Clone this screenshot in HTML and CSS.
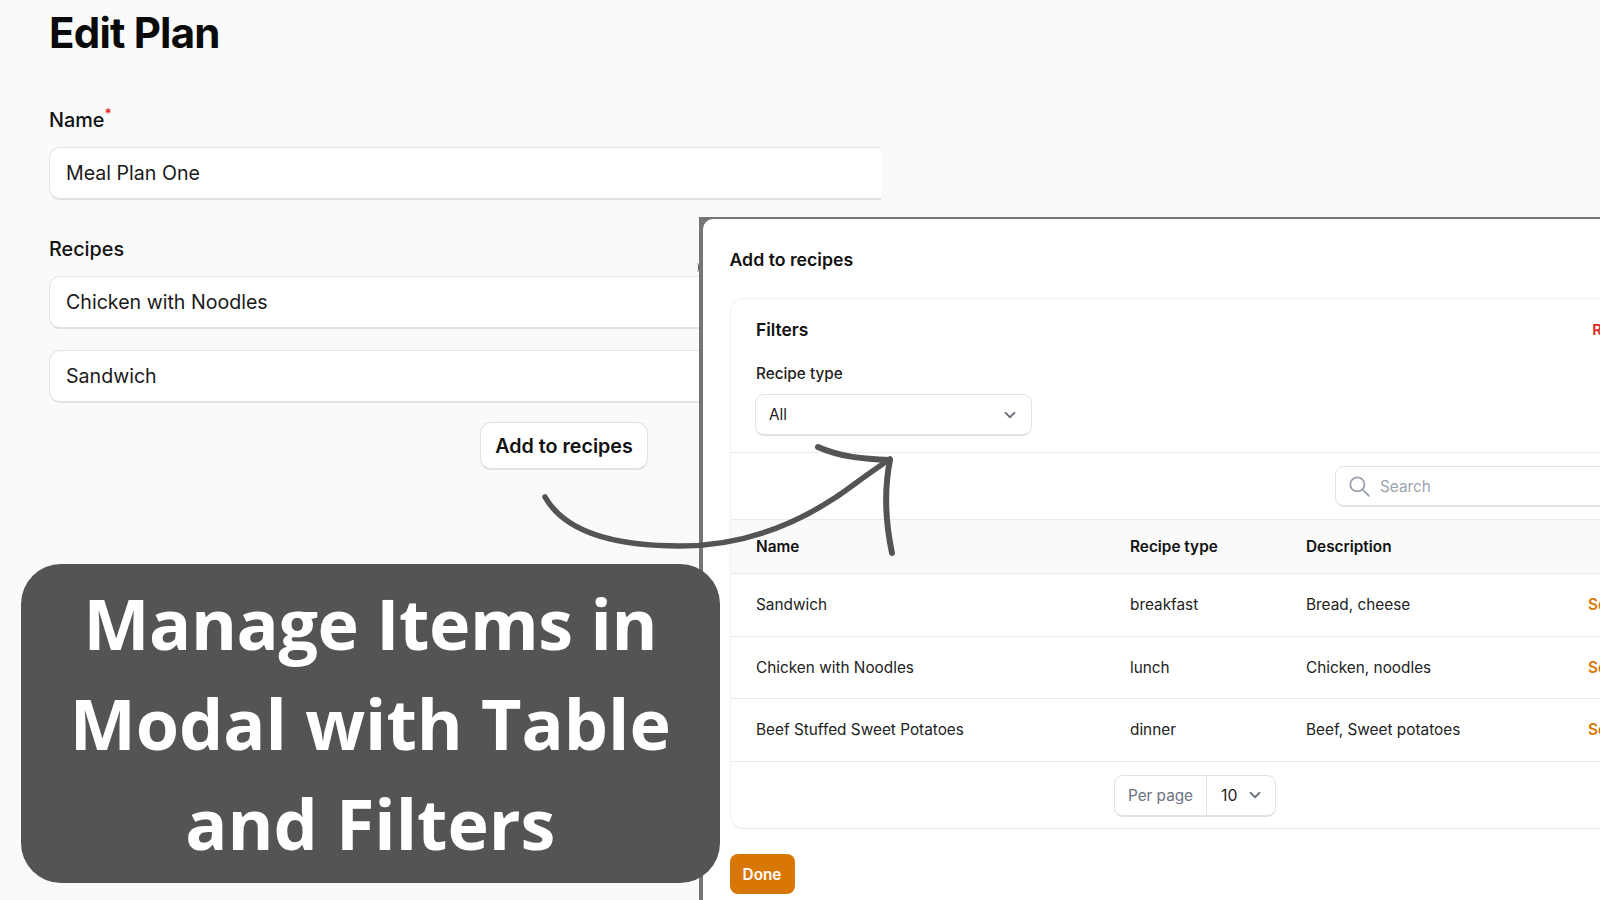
FILE: index.html
```html
<!DOCTYPE html>
<html lang="en">
<head>
<meta charset="utf-8">
<title>Edit Plan</title>
<link rel="stylesheet" href="styles.css">
</head>
<body>
<main class="page">
  <h1 class="title">Edit Plan</h1>
  <div class="field name-field">
    <label class="label">Name<sup class="req">*</sup></label>
    <div class="input">Meal Plan One</div>
  </div>
  <div class="field">
    <label class="label">Recipes</label>
    <div class="input">Chicken with Noodles</div>
    <div class="input">Sandwich</div>
  </div>
  <div class="actions"><button class="btn-add">Add to recipes</button></div>
</main>

<span class="sliver"></span>

<section class="modal-frame">
  <div class="modal">
    <h2 class="modal-title">Add to recipes</h2>
    <div class="card">
      <div class="filters">
        <div class="filters-head"><span class="filters-title">Filters</span><span class="reset">Reset</span></div>
        <div class="filter-label">Recipe type</div>
        <div class="select"><span>All</span>
          <svg class="chev" viewBox="0 0 20 20"><path d="M5 7.500l5 5 5-5" fill="none" stroke="#6b7280" stroke-width="2" stroke-linecap="round" stroke-linejoin="round"/></svg>
        </div>
      </div>
      <div class="toolbar">
        <div class="search">
          <svg class="search-icon" viewBox="0 0 24 24"><path d="M21 21l-5.200-5.200M17 10.500a6.500 6.500 0 1 1-13 0 6.500 6.500 0 0 1 13 0z" fill="none" stroke="#9ca3af" stroke-width="1.7" stroke-linecap="round"/></svg>
          <span>Search</span>
        </div>
      </div>
      <div class="row head"><span>Name</span><span>Recipe type</span><span>Description</span><span></span></div>
      <div class="row"><span>Sandwich</span><span>breakfast</span><span>Bread, cheese</span><span class="select-link">Select</span></div>
      <div class="row"><span>Chicken with Noodles</span><span>lunch</span><span>Chicken, noodles</span><span class="select-link">Select</span></div>
      <div class="row"><span>Beef Stuffed Sweet Potatoes</span><span>dinner</span><span>Beef, Sweet potatoes</span><span class="select-link">Select</span></div>
      <div class="pager-wrap">
        <div class="pager"><span class="pp">Per page</span><span class="pv">10
          <svg class="chev" viewBox="0 0 20 20"><path d="M5 7.500l5 5 5-5" fill="none" stroke="#6b7280" stroke-width="2" stroke-linecap="round" stroke-linejoin="round"/></svg></span></div>
      </div>
    </div>
    <button class="done">Done</button>
  </div>
</section>

<svg class="arrow" viewBox="0 0 1600 900">
  <g fill="none" stroke="#545454" stroke-linecap="round" stroke-linejoin="round">
    <path stroke-width="5.500" d="M545 497C566 534 620 546 680 546C739 546 797 528 856 483C868 474 880 466 890 459"/>
    <path stroke-width="6" d="M818 447C840 457 864 459 890 460C884 490 885 520 892 553"/>
  </g>
</svg>

<aside class="caption"><span class="caption-first">Manage Items in</span><br>Modal with Table<br>and Filters</aside>
</body>
</html>
```
FILE: styles.css
```css
* { box-sizing: border-box; }
html, body { margin: 0; height: 100%; }
body {
  width: 1600px; height: 900px; overflow: hidden; position: relative;
  background: #fafafa; color: #0a0a0a;
  font-family: Inter, "Liberation Sans", sans-serif;
}
.page { width: 881px; padding: 0 0 0 49px; overflow: hidden; }
.title { margin: 8px 0 0; font-size: 42px; line-height: 50px; font-weight: 700; letter-spacing: -0.8px; color: #0a0a0a; }
.field { margin: 0; }
.name-field { margin-top: 49px; margin-bottom: 36px; }
.label { display: block; font-size: 19.800px; line-height: 26px; font-weight: 500; color: #111; margin-bottom: 14px; }
.req { color: #dc2626; font-size: 14px; line-height: 0; }
.input {
  width: 900px; height: 53px; margin-bottom: 21px; padding-left: 16px;
  display: flex; align-items: center;
  background: #fff; border: 1px solid #e5e5e5; border-bottom: 2px solid #e2e2e2; border-radius: 11px;
  font-size: 19.600px; color: #1a1a1a;
}
.name-field .input { margin-bottom: 0; }
.input:last-child { margin-bottom: 19px; }
.actions { width: 599px; display: flex; justify-content: flex-end; }
.btn-add {
  width: 168px; height: 48px; background: #fff; border: 1px solid #e2e2e2; border-bottom-width: 2px; border-radius: 11px;
  font: 600 19.700px Inter, sans-serif; color: #111;
}
.sliver { position: absolute; left: 695px; top: 263px; width: 4px; height: 9px; border-right: 1.500px solid #555; border-radius: 0 50% 50% 0; }
.modal-frame {
  position: absolute; left: 699px; top: 217px; width: 901px; height: 683px;
  background: #757575; padding: 2px 0 0 4px; overflow: hidden;
}
.modal { height: 100%; background: #fff; border-top-left-radius: 10px; padding: 0 0 0 26.500px; width: 1000px; }
.modal-title { margin: 0; padding-top: 29px; font-size: 17.700px; line-height: 24px; font-weight: 600; color: #111; }
.card { margin-top: 26px; width: 1000px; height: 531px; border: 1px solid #f0f0f0; border-bottom: 1.500px solid #e8e8e8; border-radius: 14px; overflow: hidden; }
.filters { height: 154px; padding: 20px 0 0 25.500px; border-bottom: 1px solid #eaeaea; }
.filters-head { display: flex; width: 910px; justify-content: space-between; font-size: 17.400px; font-weight: 600; line-height: 22px; }
.filters-title { color: #111; }
.reset { color: #dc2626; font-size: 15px; font-weight: 600; margin-right: 33px; }
.filter-label { margin-top: 22px; font-size: 15.300px; line-height: 22px; font-weight: 500; color: #222; }
.select {
  margin-top: 9px; width: 277px; height: 42px; padding: 0 12px 0 13px; margin-left: -1px;
  display: flex; align-items: center; justify-content: space-between;
  border: 1px solid #e2e2e2; border-bottom-width: 2px; border-radius: 9px; font-size: 15.300px; color: #222;
}
.chev { width: 18px; height: 18px; }
.toolbar { height: 67px; padding: 13px 0 0 604.500px; border-bottom: 1px solid #eaeaea; }
.search {
  width: 300px; height: 41px; display: flex; align-items: center; gap: 8px; padding-left: 10px;
  border: 1px solid #e2e2e2; border-bottom-width: 2px; border-radius: 9px; font-size: 15.300px; color: #9ca3af;
}
.search-icon { width: 26px; height: 26px; }
.row {
  display: grid; grid-template-columns: 374px 176px 282px 1fr; align-items: center;
  height: 62.500px; padding-left: 25.500px; border-bottom: 1.500px solid #eaeaea;
  font-size: 15.350px; color: #222;
}
.head { height: 54px; background: #fafafa; font-weight: 600; color: #111; }
.select-link { color: #d97706; font-weight: 600; }
.pager-wrap { display: flex; padding: 13px 0 0 383.500px; }
.pager { display: flex; height: 42px; width: 162px; border: 1px solid #e2e2e2; border-bottom-width: 2px; border-radius: 9px; font-size: 15.300px; align-items: stretch; }
.pp { width: 92px; display: flex; align-items: center; justify-content: center; color: #6b7280; border-right: 1px solid #e5e5e5; }
.pv { flex: 1; display: flex; align-items: center; gap: 9px; padding-left: 14px; color: #222; font-size: 15.800px; }
.pv .chev { width: 18px; height: 18px; }
.done {
  display: block; margin-top: 25px; width: 65px; height: 40px; border: 0; border-radius: 8px;
  background: #d97706; color: #fff; font: 600 15.300px Inter, sans-serif; padding: 0;
}
.arrow { position: absolute; left: 0; top: 0; width: 1600px; height: 900px; pointer-events: none; }
.caption {
  position: absolute; left: 20.500px; top: 564px; width: 699.500px; height: 319px; padding-top: 9px;
  background: #545454; border-radius: 40px; color: #fff; text-align: center;
  font-family: "Open Sans", sans-serif; font-weight: 700; font-size: 70px; line-height: 100px;
}
.caption-first { letter-spacing: -0.4px; }
```
